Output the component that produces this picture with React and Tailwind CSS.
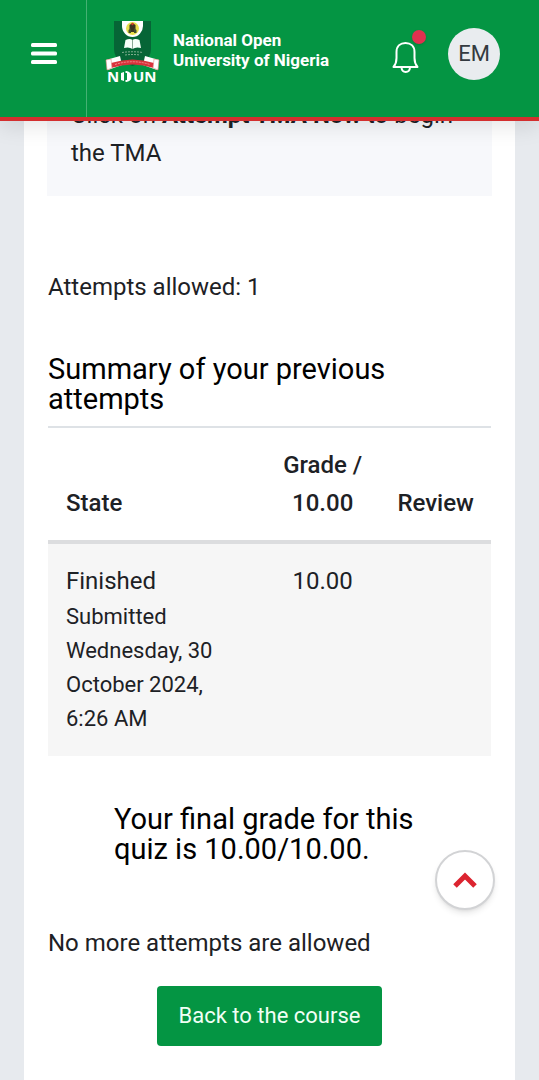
import React from "react";

function Crest() {
  return (
    <svg viewBox="0 0 56 66" className="h-[66px] w-14 shrink-0" aria-label="NOUN crest" role="img">
      <path d="M9 1H46V29Q46 38 38 42L27.500 46L17 42Q9 38 9 29Z" fill="#066536" />
      <path d="M17 1H38V6A10.500 11 0 0 1 17 6Z" fill="#fff" />
      <circle cx="27.500" cy="8.500" r="6.500" fill="#e9df4c" />
      <path d="M24.500 5L27.500 3L30.500 5V9L29 12H26L24.500 9Z" fill="#3a3522" />
      <path d="M23.500 10L26 8V13H23.500ZM31.500 10L29 8V13H31.500Z" fill="#42502b" />
      <circle cx="27.500" cy="4" r="1.200" fill="#d63c2c" />
      <path d="M20.500 20Q25 18 27.500 20Q30 18 34.500 20L36 28Q31 26.500 27.500 29Q24 26.500 19 28Z" fill="#f7fff9" />
      <path d="M27.500 20V29" stroke="#8aa995" strokeWidth="1" />
      <path d="M17 32.500Q27.500 31 38 32.500M20 35Q27.500 34 35 35" fill="none" stroke="#9fc0a6" strokeWidth="0.800" strokeDasharray="2 1" />
      <path d="M1 40L15 36L17 45L3 50L4 45Z" fill="#fff" />
      <path d="M54 40L40 36L38 45L52 50L51 45Z" fill="#fff" />
      <path d="M6 43Q27.500 36 49 43V48Q27.500 41 6 48Z" fill="#d9323b" />
      <path d="M10 44.500Q27.500 39 45 44.500" fill="none" stroke="#f3a7a4" strokeWidth="0.800" strokeDasharray="2 1" />
      <path d="M1 40L6 39L7 48L2 50ZM54 40L49 39L48 48L53 50Z" fill="#fff" stroke="#e58a86" strokeWidth="0.600" />
      <text x="2" y="62" fill="#fff" fontFamily="Open Sans, sans-serif" fontWeight="700" fontSize="15">N</text>
      <path d="M16 53L19 52V61L16 60ZM20.500 51H21.500Q26.500 52 26.500 56.500Q26.500 61 21.500 62H20.500V60H22V53H20.500Z" fill="#fff" />
      <text x="28" y="62" fill="#fff" fontFamily="Open Sans, sans-serif" fontWeight="700" fontSize="15">UN</text>
    </svg>
  );
}

function Header() {
  return (
    <header className="sticky top-0 z-20 flex h-[121px] items-stretch border-b-4 border-[#d32f2f] bg-[#049543] shadow-[0_6px_20px_rgba(0,0,0,0.1)]">
      <button type="button" aria-label="Open menu" className="flex w-[87px] shrink-0 justify-center border-r border-[#45b173] pl-px pt-[43px]">
        <svg viewBox="0 0 26 22" className="h-[22px] w-[26px]" fill="#fff">
          <rect width="26" height="4" rx="1.500" />
          <rect y="8.500" width="26" height="4" rx="1.500" />
          <rect y="17" width="26" height="4" rx="1.500" />
        </svg>
      </button>
      <a href="#home" className="flex items-start gap-3 pl-[18px] pt-5 text-white">
        <Crest />
        <span className="mt-2.5 whitespace-nowrap text-[17px] font-bold leading-5">
          National Open
          <br />
          University of Nigeria
        </span>
      </a>
      <div className="ml-auto flex items-start gap-7 pr-[39px] pt-7">
        <button type="button" aria-label="Notifications" className="relative mt-3">
          <svg viewBox="0 0 28 34" className="h-[34px] w-7" fill="none" stroke="#fff" strokeWidth="2" strokeLinejoin="round">
            <path d="M1.500 27C4 24 4.500 22 4.500 18V12C4.500 6 8.500 3 13.500 3S22.500 6 22.500 12V18C22.500 22 23 24 25.500 27Z" />
            <path d="M9.500 27.500C10 33.500 17.500 33.500 18 27.500" />
          </svg>
          <span className="absolute -top-2.5 left-5 size-3.5 rounded-full bg-[#e0314f] shadow" />
        </button>
        <button type="button" aria-label="User menu" className="flex size-[52px] items-center justify-center rounded-full bg-[#e9ecef] text-[22px] text-[#343a40]">
          EM
        </button>
      </div>
    </header>
  );
}

function Attempts() {
  return (
    <table className="mt-3 w-full table-fixed border-t-2 border-[#dee2e6] leading-[38px]">
      <colgroup>
        <col />
        <col className="w-[26%]" />
        <col className="w-[25%]" />
      </colgroup>
      <thead>
        <tr className="border-b-4 border-[#dcdddf] align-bottom">
          <th scope="col" className="p-[18px] text-left font-medium">State</th>
          <th scope="col" className="px-4 py-[18px] text-center font-medium">Grade / 10.00</th>
          <th scope="col" className="px-4 py-[18px] text-center font-medium">Review</th>
        </tr>
      </thead>
      <tbody>
        <tr className="bg-[#f6f6f6] align-top">
          <td className="px-[18px] pb-5 pt-[18px]">
            Finished
            <span className="block text-[22px] leading-[34px]">Submitted Wednesday, 30 October 2024, 6:26 AM</span>
          </td>
          <td className="px-4 pb-5 pt-[18px] text-center">10.00</td>
          <td className="px-4 pb-5 pt-[18px]" />
        </tr>
      </tbody>
    </table>
  );
}

export default function App() {
  return (
    <div className="min-h-screen bg-[#e7eaee] font-[Roboto,sans-serif] text-[24px] leading-[38px] text-[#1d2125]">
      <Header />
      <main className="-mt-[25px] mx-6 bg-white px-6 pb-9">
        <section className="-mx-px bg-[#f7f8fb] px-6 pb-6">
          <p>
            Click on <strong className="font-bold">Attempt TMA Now</strong> to begin the TMA
          </p>
        </section>
        <p className="mt-[72px]">Attempts allowed: 1</p>
        <h3 className="mt-12 text-[29px] leading-[30px] text-black">Summary of your previous attempts</h3>
        <Attempts />
        <h3 className="mx-[66px] mt-12 text-[29px] leading-[30px] text-black">
          Your final grade for this quiz is 10.00/10.00.
        </h3>
        <p className="mt-[60px]">No more attempts are allowed</p>
        <div className="mt-6 flex justify-center">
          <button type="button" className="h-[60px] rounded bg-[#049543] px-[22px] text-[22px] text-[#f0fff5]">
            Back to the course
          </button>
        </div>
      </main>
      <button type="button" aria-label="Back to top" className="fixed bottom-[170px] right-11 z-10 flex size-[60px] items-center justify-center rounded-full border-2 border-[#d2d3d5] bg-white shadow-md">
        <svg viewBox="0 0 24 16" className="h-4 w-6" fill="none" stroke="#dc2430" strokeWidth="5">
          <path d="M2 14L12 4L22 14" />
        </svg>
      </button>
    </div>
  );
}
